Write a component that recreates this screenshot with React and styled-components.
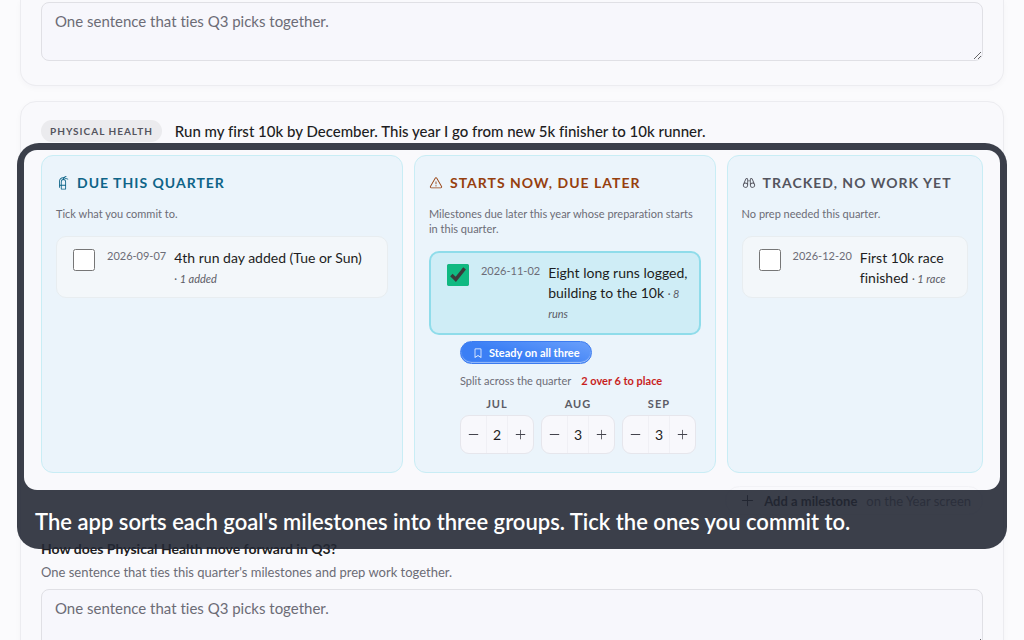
import React, { useState } from 'react'
import styled, { createGlobalStyle } from 'styled-components'
import {
  PiFireExtinguisher,
  PiWarning,
  PiBinoculars,
  PiBookmarkSimple,
  PiPlus,
  PiMinus,
} from 'react-icons/pi'

const GlobalStyle = createGlobalStyle`
  * {
    box-sizing: border-box;
  }
  body {
    margin: 0;
    background: #fbfbfd;
    color: #1d1d22;
    font-family: Lato, "Open Sans", sans-serif;
    font-size: 14px;
    font-variant-ligatures: none;
  }
  button, input, textarea {
    font-family: inherit;
    font-variant-ligatures: inherit;
  }
`

const Page = styled.main`
  display: flex;
  flex-direction: column;
  gap: 15px;
  height: 100vh;
  padding: 0 20px;
  overflow: hidden;
`

const Card = styled.section`
  flex: none;
  padding: ${(p) => (p.$continued ? '2px' : '18px')} 20px 24px;
  border: 1px solid #ececf0;
  border-top-width: ${(p) => (p.$continued ? '0' : '1px')};
  border-radius: ${(p) => (p.$continued ? '0 0 16px 16px' : '16px')};
  background: #f9f9fc;
  box-shadow: 0 2px 6px rgba(30, 30, 60, 0.03);
`

const Note = styled.textarea`
  display: block;
  width: 100%;
  height: 59px;
  padding: 9px 13px;
  border: 1px solid #e0e0e5;
  border-radius: 8px;
  background: #f7f7fc;
  color: #1d1d22;
  font-size: 15px;
  line-height: 18px;
  resize: vertical;
  &::placeholder {
    color: #6c6c76;
  }
`

const GoalHeader = styled.header`
  display: flex;
  align-items: center;
  gap: 13px;
  height: 22px;
  margin-bottom: 13px;
`

const Area = styled.span`
  padding: 0 9px;
  border-radius: 11px;
  background: #ebebee;
  color: #54545e;
  font-size: 10px;
  font-weight: 700;
  letter-spacing: 1px;
  line-height: 22px;
  text-transform: uppercase;
`

const GoalTitle = styled.h2`
  margin: 0;
  font-size: 15px;
  font-weight: 500;
  line-height: 20px;
`

const Spotlight = styled.div`
  position: relative;
`

const Groups = styled.div`
  display: grid;
  grid-template-columns: 1.2fr 1fr 0.85fr;
  gap: 11px;
`

const Group = styled.section`
  min-width: 0;
  padding: 18px 14px;
  border: 1px solid #c9edf5;
  border-radius: 12px;
  background: #ebf4fb;
`

const GroupTitle = styled.h3`
  display: flex;
  align-items: center;
  gap: 7px;
  margin: 0 0 14px;
  color: ${(p) => p.$color};
  font-size: 14px;
  font-weight: 700;
  letter-spacing: 1px;
  line-height: 18px;
  text-transform: uppercase;
  white-space: nowrap;
  svg {
    flex: none;
    font-size: 14px;
  }
`

const GroupHint = styled.p`
  margin: 0 0 15px;
  color: #6c6c76;
  font-size: 11px;
  line-height: 15px;
`

const Milestone = styled.label`
  display: flex;
  align-items: flex-start;
  padding: ${(p) => (p.$picked ? '10px 8px 10px 16px' : '11px 8px 9px 16px')};
  border: ${(p) => (p.$picked ? '2px solid #8fdcea' : '1px solid #e8edf0')};
  border-radius: 10px;
  background: ${(p) => (p.$picked ? '#cfedf6' : '#f3f7fa')};
`

const Tick = styled.input`
  flex: none;
  width: 22px;
  height: 22px;
  margin: 1px 12px 0 0;
  accent-color: #10b981;
`

const DueDate = styled.time`
  flex: none;
  margin-right: 8px;
  color: #6c6c76;
  font-size: 11px;
  line-height: 16px;
`

const MilestoneName = styled.span`
  font-size: 14px;
  line-height: 20px;
`

const Amount = styled.em`
  color: #5c5c66;
  font-size: 11px;
  line-height: 14px;
`

const Plan = styled.div`
  display: flex;
  flex-direction: column;
  align-items: flex-start;
  padding: 6px 0 0 31px;
`

const Mode = styled.button`
  display: flex;
  align-items: center;
  gap: 5px;
  height: 23px;
  padding: 0 11px;
  border: 1px solid #3b7bf0;
  border-radius: 12px;
  background: linear-gradient(15deg, #3b7ff5 40%, #6ba0fb);
  box-shadow: inset 0 -1px 1px rgba(255, 255, 255, 0.5);
  color: #fff;
  font-size: 11px;
  font-weight: 700;
  svg {
    font-size: 12px;
  }
`

const SplitLine = styled.p`
  display: flex;
  gap: 10px;
  margin: 9px 0 8px;
  color: #6c6c76;
  font-size: 11px;
  line-height: 16px;
  white-space: nowrap;
  strong {
    color: #c81e1e;
    font-weight: 700;
  }
`

const Months = styled.div`
  display: flex;
  gap: 7px;
`

const Month = styled.div`
  display: flex;
  flex-direction: column;
  gap: 4px;
  label {
    color: #5c5c66;
    font-size: 11px;
    font-weight: 700;
    letter-spacing: 1px;
    line-height: 14px;
    text-align: center;
  }
`

const Stepper = styled.div`
  display: grid;
  grid-template-columns: 1fr 22px 1fr;
  width: 74px;
  height: 39px;
  border: 1px solid #e6e6ec;
  border-radius: 9px;
  background: #f8f8fc;
  overflow: hidden;
`

const StepButton = styled.button`
  display: flex;
  align-items: center;
  justify-content: center;
  padding: 0;
  border: 0;
  background: none;
  color: #44444d;
  font-size: 13px;
`

const Count = styled.input`
  width: 100%;
  padding: 0;
  border: solid #f0f0f5;
  border-width: 0 1px;
  background: none;
  color: #1d1d22;
  font-size: 14px;
  text-align: center;
`

const Frame = styled.div`
  position: absolute;
  inset: -12px -24px -76px;
  display: flex;
  flex-direction: column;
  border-radius: 22px;
  overflow: hidden;
  pointer-events: none;
`

const FrameWindow = styled.div`
  flex: 1;
  margin: 7px 7px 0;
  border-radius: 13px;
  box-shadow: 0 0 0 80px rgba(35, 39, 52, 0.89);
`

const Caption = styled.p`
  position: relative;
  margin: 0;
  padding: 18px 18px 14px;
  color: #fff;
  font-size: 22px;
  font-weight: 600;
  line-height: 27px;
  white-space: nowrap;
`

const AddLink = styled.a`
  display: flex;
  align-items: center;
  gap: 9px;
  width: fit-content;
  height: 29px;
  margin: 13px 0 25px auto;
  padding: 0 11px 0 14px;
  border: 1px solid #f2f2f6;
  border-radius: 15px;
  color: #6c6c76;
  font-size: 13px;
  text-decoration: none;
  strong {
    color: #1d1d22;
    font-weight: 700;
  }
  svg {
    color: #1d1d22;
    font-size: 15px;
  }
`

const Question = styled.label`
  display: block;
  font-size: 14px;
  font-weight: 700;
  line-height: 18px;
`

const QuestionHint = styled.p`
  margin: 5px 0 8px;
  color: #6c6c76;
  font-size: 13px;
  line-height: 18px;
`

function MilestoneItem({ date, name, amount, checked }) {
  const [picked, setPicked] = useState(!!checked)
  return (
    <Milestone $picked={picked}>
      <Tick type="checkbox" checked={picked} onChange={() => setPicked(!picked)} />
      <DueDate dateTime={date}>{date}</DueDate>
      <MilestoneName>
        {name} <Amount>·&nbsp;{amount}</Amount>
      </MilestoneName>
    </Milestone>
  )
}

function MonthStepper({ month, start }) {
  const [count, setCount] = useState(start)
  const id = `count-${month}`
  return (
    <Month>
      <label htmlFor={id}>{month}</label>
      <Stepper>
        <StepButton type="button" aria-label={`Less in ${month}`} onClick={() => setCount(Math.max(0, count - 1))}>
          <PiMinus />
        </StepButton>
        <Count id={id} inputMode="numeric" value={count} onChange={(e) => setCount(Number(e.target.value) || 0)} />
        <StepButton type="button" aria-label={`More in ${month}`} onClick={() => setCount(count + 1)}>
          <PiPlus />
        </StepButton>
      </Stepper>
    </Month>
  )
}

export default function App() {
  return (
    <Page>
      <GlobalStyle />
      <Card $continued>
        <Note aria-label="Quarter sentence" placeholder="One sentence that ties Q3 picks together." />
      </Card>

      <Card>
        <GoalHeader>
          <Area>Physical health</Area>
          <GoalTitle>Run my first 10k by December. This year I go from new 5k finisher to 10k runner.</GoalTitle>
        </GoalHeader>

        <Spotlight>
          <Groups>
            <Group>
              <GroupTitle $color="#0e6488"><PiFireExtinguisher />Due this quarter</GroupTitle>
              <GroupHint>Tick what you commit to.</GroupHint>
              <MilestoneItem date="2026-09-07" name="4th run day added (Tue or Sun)" amount={'1\u00a0added'} />
            </Group>

            <Group>
              <GroupTitle $color="#963f0e"><PiWarning />Starts now, due later</GroupTitle>
              <GroupHint>Milestones due later this year whose preparation starts in this quarter.</GroupHint>
              <MilestoneItem date="2026-11-02" name="Eight long runs logged, building to the 10k" amount="8 runs" checked />
              <Plan>
                <Mode type="button"><PiBookmarkSimple />Steady on all three</Mode>
                <SplitLine>Split across the quarter <strong>2 over 6 to place</strong></SplitLine>
                <Months>
                  <MonthStepper month="JUL" start={2} />
                  <MonthStepper month="AUG" start={3} />
                  <MonthStepper month="SEP" start={3} />
                </Months>
              </Plan>
            </Group>

            <Group>
              <GroupTitle $color="#54545e"><PiBinoculars />Tracked, no work yet</GroupTitle>
              <GroupHint>No prep needed this quarter.</GroupHint>
              <MilestoneItem date="2026-12-20" name="First 10k race finished" amount={'1\u00a0race'} />
            </Group>
          </Groups>
          <Frame>
            <FrameWindow />
            <Caption>The app sorts each goal's milestones into three groups. Tick the ones you commit to.</Caption>
          </Frame>
        </Spotlight>

        <AddLink href="#year">
          <PiPlus />
          <strong>Add a milestone</strong>
          <span>on the Year screen</span>
        </AddLink>

        <Question htmlFor="forward">How does Physical Health move forward in Q3?</Question>
        <QuestionHint>One sentence that ties this quarter's milestones and prep work together.</QuestionHint>
        <Note id="forward" placeholder="One sentence that ties Q3 picks together." />
      </Card>
    </Page>
  )
}
